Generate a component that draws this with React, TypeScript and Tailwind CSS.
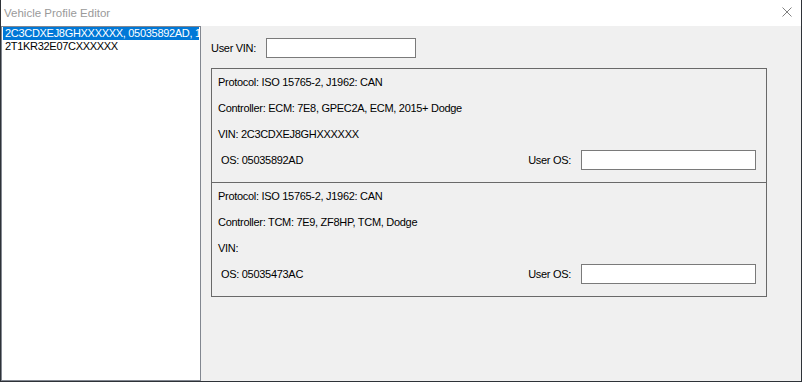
import React from "react";

const font = { fontFamily: '"Liberation Sans", Arial, sans-serif' };

function Section({ controller, vin, os }: { controller: string; vin: string; os: string }) {
  return (
    <div className="flex flex-col">
      <div className="h-[13px] leading-[13px] whitespace-nowrap">Protocol: ISO 15765-2, J1962: CAN</div>
      <div className="mt-[13px] h-[13px] leading-[13px] whitespace-nowrap">{controller}</div>
      <div className="mt-[13px] h-[13px] leading-[13px] whitespace-nowrap">{vin}</div>
      <div className="mt-[9px] h-[20px] flex items-center justify-between">
        <span className="ml-[3px] leading-[13px]">{os}</span>
        <div className="flex items-center">
          <span className="leading-[13px]">User OS:</span>
          <div className="ml-[10px] w-[175px] h-[20px] border border-[#7a7a7a] bg-white" />
        </div>
      </div>
    </div>
  );
}

export default function App() {
  return (
    <div
      className="w-[802px] h-[382px] flex flex-col bg-white border-x border-b border-[#2e3238] text-[11px] tracking-[-0.3px] text-black"
      style={font}
    >
      <div className="h-[26px] flex items-center justify-between pl-[3px] pr-[9px]">
        <span className="text-[11.5px] leading-[13px] tracking-normal text-[#9a9a9a]">Vehicle Profile Editor</span>
        <svg width="10" height="10" viewBox="0 0 10 10" className="mb-[2px]">
          <path d="M0.5 0.5 L9.5 9.5 M9.5 0.5 L0.5 9.5" stroke="#808080" strokeWidth="1" />
        </svg>
      </div>
      <div className="flex-1 flex min-h-0">
        <div className="w-[200px] border border-[#828790] bg-white px-[1px] overflow-hidden">
          <div className="h-[13px] leading-[13px] bg-[#0078d7] text-white pl-[2px] whitespace-nowrap overflow-hidden">
            2C3CDXEJ8GHXXXXXX, 05035892AD, 1962
          </div>
          <div className="h-[13px] leading-[13px] pl-[2px] whitespace-nowrap">2T1KR32E07CXXXXXX</div>
        </div>
        <div className="flex-1 bg-[#f0f0f0] pl-[10px] pt-[12px]">
          <div className="flex items-center h-[20px]">
            <span className="w-[55px] leading-[13px]">User VIN:</span>
            <div className="w-[150px] h-[20px] border border-[#7a7a7a] bg-white" />
          </div>
          <div className="mt-[10px] w-[556px] flex flex-col">
            <div className="h-[115px] border border-[#696969] pl-[6px] pr-[10px] pt-[7px]">
              <Section
                controller="Controller: ECM: 7E8, GPEC2A, ECM, 2015+ Dodge"
                vin="VIN: 2C3CDXEJ8GHXXXXXX"
                os="OS: 05035892AD"
              />
            </div>
            <div className="h-[114px] border border-t-0 border-[#696969] pl-[6px] pr-[10px] pt-[7px]">
              <Section controller="Controller: TCM: 7E9, ZF8HP, TCM, Dodge" vin="VIN:" os="OS: 05035473AC" />
            </div>
          </div>
        </div>
      </div>
    </div>
  );
}
